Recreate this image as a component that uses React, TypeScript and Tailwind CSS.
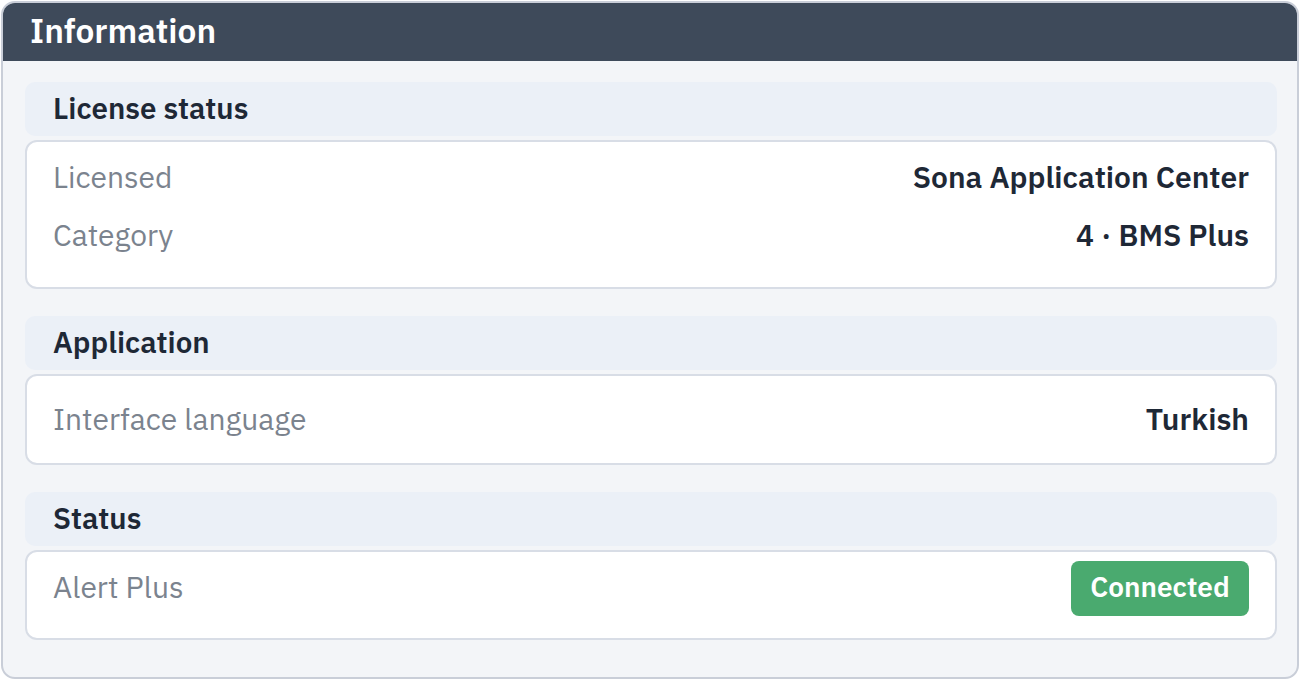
import React from "react";

const font = { fontFamily: '"IBM Plex Sans", "Noto Sans", "Liberation Sans", sans-serif' };

function SectionTitle({ children }: { children: React.ReactNode }) {
  return (
    <div className="h-[54px] rounded-[10px] bg-[#ebf0f7] pl-[28px] flex items-center text-[29.5px] font-semibold text-[#1e2836]">
      <span className="mb-[1px]">{children}</span>
    </div>
  );
}

function Row({ label, children }: { label: string; children: React.ReactNode }) {
  return (
    <div className="h-[58px] flex items-center justify-between">
      <span className="mb-[3px] text-[30px] text-[#7b838e]">{label}</span>
      {children}
    </div>
  );
}

function Value({ children }: { children: React.ReactNode }) {
  return <span className="mb-[3px] text-[30px] font-semibold text-[#1e2836]">{children}</span>;
}

export default function App() {
  return (
    <div className="w-[1300px] h-[680px] bg-white p-px" style={font}>
      <div className="h-full rounded-[14px] border-2 border-[#c9ced8] bg-[#f3f5f8] overflow-hidden flex flex-col">
        <div className="h-[58px] shrink-0 bg-[#3e4a5a] px-[27px] flex items-center text-[33.5px] font-semibold text-white">
          <span className="mb-[1px]">Information</span>
        </div>

        <div className="pl-[22px] pr-[20px] pt-[21px] flex flex-col">
          {/* License status */}
          <SectionTitle>License status</SectionTitle>
          <div className="mt-[4px] rounded-[12px] border-2 border-[#d8dde6] bg-white px-[26px] pt-[7px] pb-[22px]">
            <Row label="Licensed">
              <Value>Sona Application Center</Value>
            </Row>
            <Row label="Category">
              <Value>4 · BMS Plus</Value>
            </Row>
          </div>

          {/* Application */}
          <div className="mt-[27px]">
            <SectionTitle>Application</SectionTitle>
          </div>
          <div className="mt-[4px] rounded-[12px] border-2 border-[#d8dde6] bg-white px-[26px] pt-[15px] pb-[14px]">
            <Row label="Interface language">
              <Value>Turkish</Value>
            </Row>
          </div>

          {/* Status */}
          <div className="mt-[27px]">
            <SectionTitle>Status</SectionTitle>
          </div>
          <div className="mt-[4px] rounded-[12px] border-2 border-[#d8dde6] bg-white px-[26px] pt-[7px] pb-[21px]">
            <Row label="Alert Plus">
              <span className="h-[55px] w-[178px] rounded-[8px] bg-[#4aaa6f] flex items-center justify-center text-[28px] font-semibold text-white">
                <span className="mb-[2px]">Connected</span>
              </span>
            </Row>
          </div>
        </div>
      </div>
    </div>
  );
}
